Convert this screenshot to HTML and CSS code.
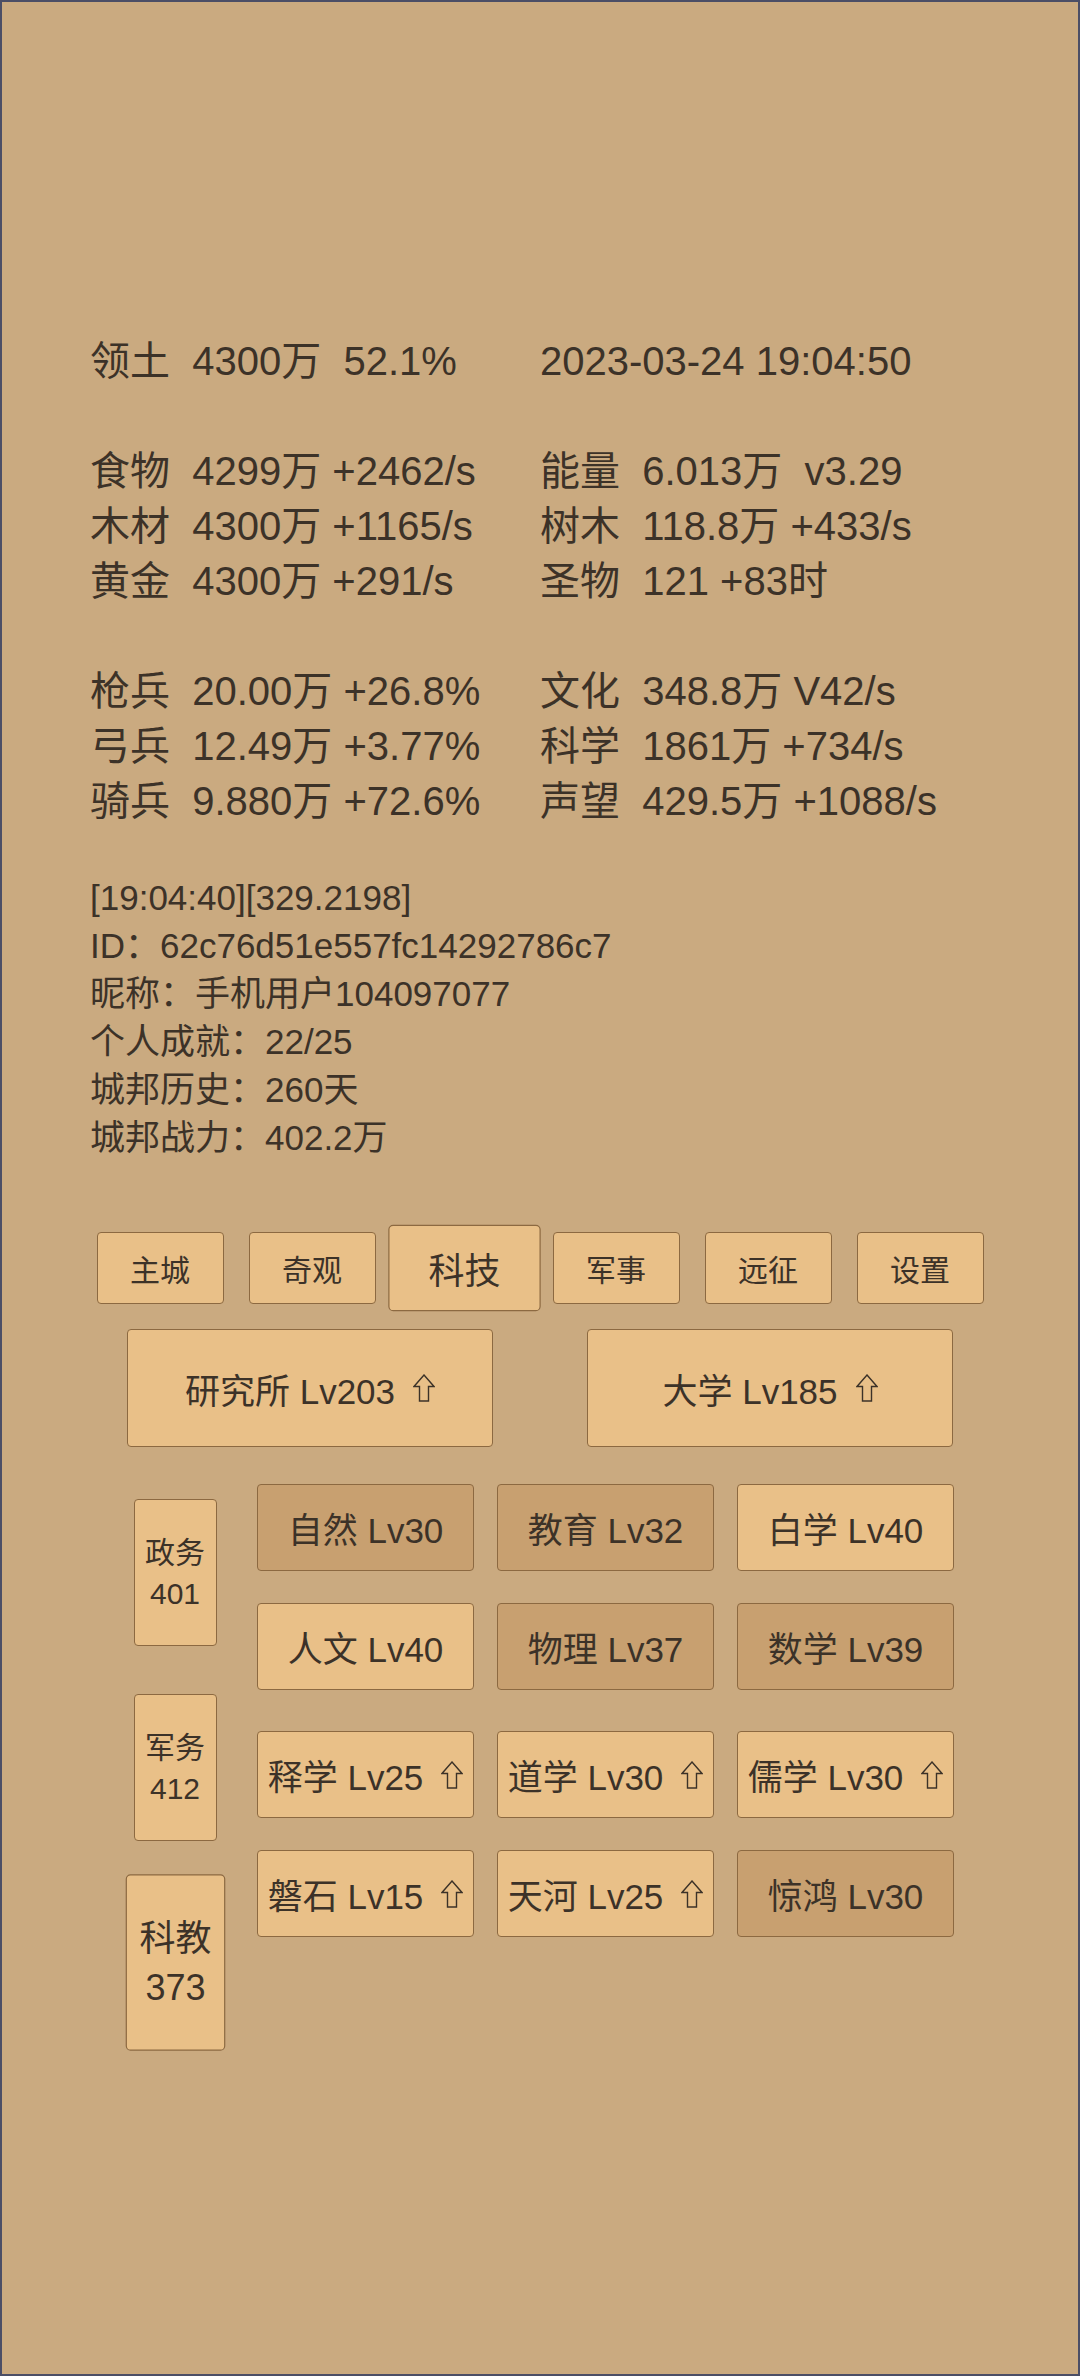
FILE: index.html
```html
<!DOCTYPE html>
<html lang="zh-CN">
<head>
<meta charset="utf-8">
<title>科技</title>
<link rel="stylesheet" href="styles.css">
</head>
<body>
<div class="page">
  <section class="stats">
    <div class="row"><span>领土  4300万  52.1%</span><span>2023-03-24 19:04:50</span></div>
    <div class="blank"></div>
    <div class="row"><span>食物  4299万 +2462/s</span><span>能量  6.013万  v3.29</span></div>
    <div class="row"><span>木材  4300万 +1165/s</span><span>树木  118.8万 +433/s</span></div>
    <div class="row"><span>黄金  4300万 +291/s</span><span>圣物  121 +83时</span></div>
    <div class="blank"></div>
    <div class="row"><span>枪兵  20.00万 +26.8%</span><span>文化  348.8万 V42/s</span></div>
    <div class="row"><span>弓兵  12.49万 +3.77%</span><span>科学  1861万 +734/s</span></div>
    <div class="row"><span>骑兵  9.880万 +72.6%</span><span>声望  429.5万 +1088/s</span></div>
  </section>

  <section class="info">
    <div>[19:04:40][329.2198]</div>
    <div>ID：62c76d51e557fc14292786c7</div>
    <div>昵称：手机用户104097077</div>
    <div>个人成就：22/25</div>
    <div>城邦历史：260天</div>
    <div>城邦战力：402.2万</div>
  </section>

  <nav class="tabs">
    <div class="btn tab">主城</div>
    <div class="btn tab">奇观</div>
    <div class="btn tab active">科技</div>
    <div class="btn tab">军事</div>
    <div class="btn tab">远征</div>
    <div class="btn tab">设置</div>
  </nav>

  <div class="buildings">
    <div class="btn building">研究所 Lv203<svg class="up" viewBox="0 0 22 28"><path d="M11 1 L21 12.5 L15.5 12.5 L15.5 27 L6.5 27 L6.5 12.5 L1 12.5 Z"/></svg></div>
    <div class="btn building">大学 Lv185<svg class="up" viewBox="0 0 22 28"><path d="M11 1 L21 12.5 L15.5 12.5 L15.5 27 L6.5 27 L6.5 12.5 L1 12.5 Z"/></svg></div>
  </div>

  <div class="tech">
    <div class="side">
      <div class="btn side-btn"><span>政务</span><span>401</span></div>
      <div class="btn side-btn"><span>军务</span><span>412</span></div>
      <div class="btn side-btn active"><span>科教</span><span>373</span></div>
    </div>
    <div class="groups">
      <div class="grid">
        <div class="btn cell dark">自然 Lv30</div>
        <div class="btn cell dark">教育 Lv32</div>
        <div class="btn cell">白学 Lv40</div>
        <div class="btn cell">人文 Lv40</div>
        <div class="btn cell dark">物理 Lv37</div>
        <div class="btn cell dark">数学 Lv39</div>
      </div>
      <div class="grid">
        <div class="btn cell">释学 Lv25<svg class="up" viewBox="0 0 22 28"><path d="M11 1 L21 12.5 L15.5 12.5 L15.5 27 L6.5 27 L6.5 12.5 L1 12.5 Z"/></svg></div>
        <div class="btn cell">道学 Lv30<svg class="up" viewBox="0 0 22 28"><path d="M11 1 L21 12.5 L15.5 12.5 L15.5 27 L6.5 27 L6.5 12.5 L1 12.5 Z"/></svg></div>
        <div class="btn cell">儒学 Lv30<svg class="up" viewBox="0 0 22 28"><path d="M11 1 L21 12.5 L15.5 12.5 L15.5 27 L6.5 27 L6.5 12.5 L1 12.5 Z"/></svg></div>
        <div class="btn cell">磐石 Lv15<svg class="up" viewBox="0 0 22 28"><path d="M11 1 L21 12.5 L15.5 12.5 L15.5 27 L6.5 27 L6.5 12.5 L1 12.5 Z"/></svg></div>
        <div class="btn cell">天河 Lv25<svg class="up" viewBox="0 0 22 28"><path d="M11 1 L21 12.5 L15.5 12.5 L15.5 27 L6.5 27 L6.5 12.5 L1 12.5 Z"/></svg></div>
        <div class="btn cell dark">惊鸿 Lv30</div>
      </div>
    </div>
  </div>
</div>
</body>
</html>
```

FILE: styles.css
```css
html, body {
  margin: 0;
  padding: 0;
  background: #caaa80;
}

.page {
  width: 1080px;
  height: 2376px;
  box-sizing: border-box;
  border: 2px solid #4b4e66;
  background: #caaa80;
  color: #3c3228;
  font-family: "Liberation Sans", "Noto Sans CJK SC", sans-serif;
  padding-top: 332px;
  overflow: hidden;
}

.stats {
  padding-left: 88px;
  font-size: 40px;
  line-height: 55px;
}

.stats .row {
  display: grid;
  grid-template-columns: 450px 450px;
  height: 55px;
}

.stats .row span {
  white-space: pre;
}

.stats .blank {
  height: 55px;
}

.info {
  margin-top: 45px;
  padding-left: 88px;
  font-size: 35px;
  line-height: 48px;
}

.btn {
  box-sizing: border-box;
  background: #e9c088;
  border: 1.5px solid #8c6941;
  border-radius: 4px;
  display: flex;
  align-items: center;
  justify-content: center;
  white-space: nowrap;
}

.btn.dark {
  background: #c8a070;
}

.active {
  transform: scale(1.2);
}

.tabs {
  display: flex;
  justify-content: center;
  gap: 25px;
  margin-top: 70px;
}

.tab {
  width: 127px;
  height: 72px;
  font-size: 30px;
}

.buildings {
  display: flex;
  justify-content: center;
  gap: 94px;
  margin-top: 25px;
}

.building {
  width: 366px;
  height: 118px;
  font-size: 35px;
}

.up {
  width: 22px;
  height: 28px;
  margin-left: 18px;
  flex: none;
}

.up path {
  fill: none;
  stroke: #3c3228;
  stroke-width: 1.4;
  stroke-linejoin: miter;
}

.tech {
  display: flex;
  margin-top: 37px;
  padding-left: 131.5px;
  gap: 40.5px;
}

.side {
  display: flex;
  flex-direction: column;
  gap: 48px;
  padding-top: 15px;
}

.side-btn {
  width: 83px;
  height: 147px;
  flex-direction: column;
  font-size: 30px;
  line-height: 41px;
}

.groups {
  display: flex;
  flex-direction: column;
  gap: 41px;
}

.grid {
  display: grid;
  grid-template-columns: repeat(3, 217px);
  column-gap: 23px;
  row-gap: 32px;
}

.cell {
  height: 87px;
  font-size: 35px;
}
```
